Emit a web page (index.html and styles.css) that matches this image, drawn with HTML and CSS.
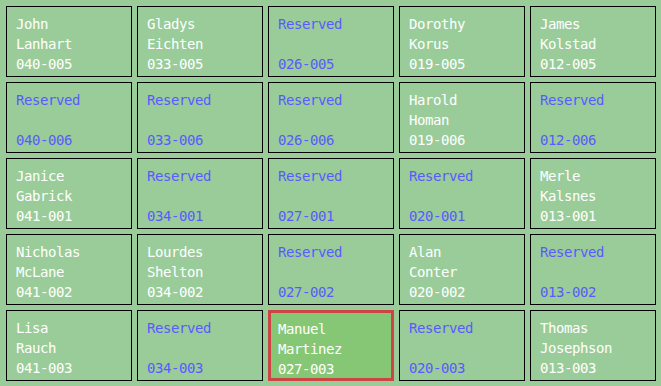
FILE: index.html
```html
<!DOCTYPE html>
<html>
<head>
<meta charset="utf-8">
<link rel="stylesheet" href="styles.css">
</head>
<body>
<div class="grid">
  <div class="cell"><div>John</div><div>Lanhart</div><div>040-005</div></div>
  <div class="cell"><div>Gladys</div><div>Eichten</div><div>033-005</div></div>
  <div class="cell reserved"><div>Reserved</div><div></div><div>026-005</div></div>
  <div class="cell"><div>Dorothy</div><div>Korus</div><div>019-005</div></div>
  <div class="cell"><div>James</div><div>Kolstad</div><div>012-005</div></div>

  <div class="cell reserved"><div>Reserved</div><div></div><div>040-006</div></div>
  <div class="cell reserved"><div>Reserved</div><div></div><div>033-006</div></div>
  <div class="cell reserved"><div>Reserved</div><div></div><div>026-006</div></div>
  <div class="cell"><div>Harold</div><div>Homan</div><div>019-006</div></div>
  <div class="cell reserved"><div>Reserved</div><div></div><div>012-006</div></div>

  <div class="cell"><div>Janice</div><div>Gabrick</div><div>041-001</div></div>
  <div class="cell reserved"><div>Reserved</div><div></div><div>034-001</div></div>
  <div class="cell reserved"><div>Reserved</div><div></div><div>027-001</div></div>
  <div class="cell reserved"><div>Reserved</div><div></div><div>020-001</div></div>
  <div class="cell"><div>Merle</div><div>Kalsnes</div><div>013-001</div></div>

  <div class="cell"><div>Nicholas</div><div>McLane</div><div>041-002</div></div>
  <div class="cell"><div>Lourdes</div><div>Shelton</div><div>034-002</div></div>
  <div class="cell reserved"><div>Reserved</div><div></div><div>027-002</div></div>
  <div class="cell"><div>Alan</div><div>Conter</div><div>020-002</div></div>
  <div class="cell reserved"><div>Reserved</div><div></div><div>013-002</div></div>

  <div class="cell"><div>Lisa</div><div>Rauch</div><div>041-003</div></div>
  <div class="cell reserved"><div>Reserved</div><div></div><div>034-003</div></div>
  <div class="cell selected"><div>Manuel</div><div>Martinez</div><div>027-003</div></div>
  <div class="cell reserved"><div>Reserved</div><div></div><div>020-003</div></div>
  <div class="cell"><div>Thomas</div><div>Josephson</div><div>013-003</div></div>
</div>
</body>
</html>
```
FILE: styles.css
```css
html, body {
  margin: 0;
  padding: 0;
  background: #99cc99;
}
body {
  width: 661px;
  height: 386px;
  overflow: hidden;
}
.grid {
  display: grid;
  grid-template-columns: repeat(5, 126px);
  grid-template-rows: repeat(5, 71px);
  gap: 5px;
  padding: 6px;
}
.cell {
  box-sizing: border-box;
  border: 1px solid #000;
  padding: 7px 0 0 9px;
  font-family: "DejaVu Sans Mono", monospace;
  font-size: 14px;
  letter-spacing: -0.43px;
  line-height: 20px;
  color: #ffffff;
  white-space: pre;
}
.cell > div {
  height: 20px;
}
.reserved {
  color: #5a5aff;
}
.selected {
  border: 3px solid #cc4444;
  background: #86c776;
  padding: 6px 0 0 7px;
}
```
